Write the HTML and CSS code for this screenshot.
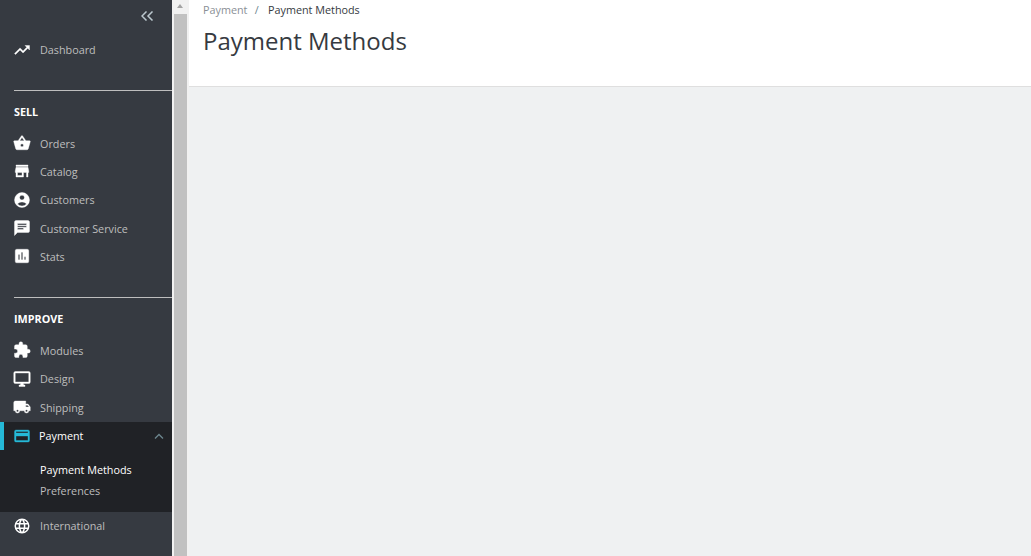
FILE: index.html
```html
<!DOCTYPE html>
<html lang="en">
<head>
  <meta charset="UTF-8">
  <title>Payment Methods</title>
  <link rel="stylesheet" href="styles.css">
</head>
<body>

<div class="layout">
  <nav class="sidebar">
    <div class="collapse-row">
      <svg class="collapse-icon" viewBox="0 0 13 10" width="13" height="10"><path d="M5.500 .5 1 5l4.500 4.500M11.500 .5 7 5l4.500 4.500" fill="none" stroke="#bcc8cf" stroke-width="1.500"/></svg>
    </div>

    <a class="nav-item">
      <svg class="nav-icon" viewBox="0 0 24 24"><path d="M16 6l2.300 2.300-4.900 4.900-4-4L2 16.600 3.400 18l6-6 4 4 6.300-6.300L22 12V6z"/></svg>
      <span>Dashboard</span>
    </a>

    <div class="section-title">SELL</div>
    <a class="nav-item">
      <svg class="nav-icon" viewBox="0 0 24 24"><path d="M17.200 9 12.800 2.500a1 1 0 0 0-1.600 0L6.800 9H2a1 1 0 0 0-1 1.300l2.600 9.200A2 2 0 0 0 5.500 21h13a2 2 0 0 0 1.900-1.500l2.600-9.200A1 1 0 0 0 22 9zM9 9l3-4.400L15 9zm3 8a2 2 0 1 1 0-4 2 2 0 0 1 0 4z"/></svg>
      <span>Orders</span>
    </a>
    <a class="nav-item">
      <svg class="nav-icon" viewBox="0 0 24 24"><path d="M20 4H4v2h16zm1 10v-2l-1-5H4l-1 5v2h1v6h10v-6h4v6h2v-6zm-9 4H6v-4h6z"/></svg>
      <span>Catalog</span>
    </a>
    <a class="nav-item">
      <svg class="nav-icon" viewBox="0 0 24 24"><path d="M12 2a10 10 0 1 0 0 20 10 10 0 0 0 0-20zm0 3.500a3.300 3.300 0 1 1 0 6.600 3.300 3.300 0 0 1 0-6.600zM12 20a7.800 7.800 0 0 1-6-2.800c1.300-1.700 3.800-2.700 6-2.700s4.700 1 6 2.700a7.800 7.800 0 0 1-6 2.800z"/></svg>
      <span>Customers</span>
    </a>
    <a class="nav-item">
      <svg class="nav-icon" viewBox="0 0 24 24"><path d="M20 2H4a2 2 0 0 0-2 2v18l4-4h14a2 2 0 0 0 2-2V4a2 2 0 0 0-2-2zM6 9h12v2H6zm8 5H6v-2h8zm4-6H6V6h12z"/></svg>
      <span>Customer Service</span>
    </a>
    <a class="nav-item">
      <svg class="nav-icon" viewBox="0 0 24 24"><path d="M19 3H5a2 2 0 0 0-2 2v14a2 2 0 0 0 2 2h14a2 2 0 0 0 2-2V5a2 2 0 0 0-2-2zM9 17H7v-7h2zm4 0h-2V7h2zm4 0h-2v-4h2z"/></svg>
      <span>Stats</span>
    </a>

    <div class="section-title section-improve">IMPROVE</div>
    <a class="nav-item">
      <svg class="nav-icon" viewBox="0 0 24 24"><path d="M20.500 11H19V7a2 2 0 0 0-2-2h-4V3.500a2.500 2.500 0 0 0-5 0V5H4a2 2 0 0 0-2 2v3.800h1.500a2.700 2.700 0 0 1 0 5.400H2V20a2 2 0 0 0 2 2h3.800v-1.500a2.700 2.700 0 0 1 5.400 0V22H17a2 2 0 0 0 2-2v-4h1.500a2.500 2.500 0 0 0 0-5z"/></svg>
      <span>Modules</span>
    </a>
    <a class="nav-item">
      <svg class="nav-icon" viewBox="0 0 24 24"><path d="M21 2H3a2 2 0 0 0-2 2v12a2 2 0 0 0 2 2h7v2H8v2h8v-2h-2v-2h7a2 2 0 0 0 2-2V4a2 2 0 0 0-2-2zm0 14H3V4h18z"/></svg>
      <span>Design</span>
    </a>
    <a class="nav-item">
      <svg class="nav-icon" viewBox="0 0 24 24"><path d="M20 8h-3V4H3a2 2 0 0 0-2 2v11h2a3 3 0 0 0 6 0h6a3 3 0 0 0 6 0h2v-5zM6 18.500a1.500 1.500 0 1 1 0-3 1.500 1.500 0 0 1 0 3zm13.500-9 2 2.500H17V9.500zM18 18.500a1.500 1.500 0 1 1 0-3 1.500 1.500 0 0 1 0 3z"/></svg>
      <span>Shipping</span>
    </a>

    <div class="active-group">
      <a class="nav-item active">
        <svg class="nav-icon" viewBox="0 0 24 24"><path d="M20 4H4a2 2 0 0 0-2 2v12a2 2 0 0 0 2 2h16a2 2 0 0 0 2-2V6a2 2 0 0 0-2-2zm0 14H4v-6h16zm0-10H4V6h16z"/></svg>
        <span>Payment</span>
        <svg class="chevron" viewBox="0 0 10 6" width="10" height="6"><path d="M1 5.500 5 1.500l4 4" fill="none" stroke="#6c868e" stroke-width="1.300"/></svg>
      </a>
      <ul class="submenu">
        <li class="current">Payment Methods</li>
        <li>Preferences</li>
      </ul>
    </div>

    <a class="nav-item">
      <svg class="nav-icon globe" viewBox="0 0 24 24"><path d="M12 2a10 10 0 1 0 0 20 10 10 0 0 0 0-20zm6.900 6h-2.950a15.600 15.600 0 0 0-1.380-3.560A8 8 0 0 1 18.900 8zM12 4c.83 1.200 1.480 2.530 1.910 4h-3.820c.43-1.470 1.080-2.800 1.910-4zM4.260 14a8.200 8.200 0 0 1 0-4h3.380a16.500 16.500 0 0 0 0 4zm.82 2h2.950c.32 1.250.78 2.450 1.380 3.560A8 8 0 0 1 5.080 16zm2.950-8H5.080a8 8 0 0 1 4.330-3.560A15.600 15.600 0 0 0 8.030 8zM12 20c-.83-1.200-1.480-2.530-1.910-4h3.820c-.43 1.470-1.080 2.800-1.910 4zm2.340-6H9.660a14.700 14.700 0 0 1 0-4h4.680a14.700 14.700 0 0 1 0 4zm.25 5.560c.6-1.110 1.060-2.310 1.380-3.560h2.950a8 8 0 0 1-4.330 3.560zM16.360 14a16.500 16.500 0 0 0 0-4h3.380a8.200 8.200 0 0 1 0 4z"/></svg>
      <span>International</span>
    </a>
  </nav>

  <div class="scrollbar">
    <div class="scroll-arrow"></div>
    <div class="scroll-thumb"></div>
  </div>

  <main class="content">
    <header class="page-head">
      <div class="breadcrumb">
        <span class="crumb-link">Payment</span>
        <span class="crumb-sep">/</span>
        <span class="crumb-current">Payment Methods</span>
      </div>
      <h1>Payment Methods</h1>
    </header>
  </main>
</div>

</body>
</html>
```

FILE: styles.css
```css
html, body {
  margin: 0;
  height: 100%;
  overflow: hidden;
}
body {
  font-family: "Open Sans", "Liberation Sans", sans-serif;
  background-color: #eff1f2;
}
.layout {
  display: flex;
  height: 556px;
}

/* Sidebar */
.sidebar {
  width: 172px;
  flex: none;
  background-color: #363a41;
  overflow: hidden;
}
.collapse-row {
  display: flex;
  justify-content: flex-end;
  height: 35.5px;
  padding: 11px 18px 0 0;
  box-sizing: border-box;
}
.nav-item {
  display: flex;
  align-items: center;
  height: 28.3px;
  padding-left: 13px;
  font-size: 10.8px;
  color: #bebebe;
}
.nav-icon {
  width: 18px;
  height: 18px;
  margin-right: 9px;
  fill: #fff;
  stroke: #fff;
  stroke-width: .5;
  flex: none;
}
.nav-icon.globe {
  stroke: none;
}
.section-title {
  margin: 26px 0 0 14px;
  padding: 14px 0 10.2px;
  border-top: 1px solid #bebebe;
  font-size: 10.8px;
  font-weight: 700;
  line-height: 14px;
  color: #fff;
}
.section-improve {
  margin-top: 26.3px;
  padding-bottom: 10.5px;
}
.active-group {
  margin-top: .4px;
  background-color: #202226;
  height: 90px;
}
.nav-item.active {
  position: relative;
  color: #fff;
  height: 28px;
}
.nav-item.active::before {
  content: "";
  position: absolute;
  left: 0;
  top: 0;
  bottom: 0;
  width: 4px;
  background-color: #25b9d7;
}
.nav-item.active .nav-icon {
  margin-right: 8px;
  fill: #25b9d7;
  stroke: #25b9d7;
}
.chevron {
  margin-left: auto;
  margin-right: 8px;
}
.submenu {
  list-style: none;
  margin: 0;
  padding: 9px 0 0 40px;
  font-size: 10.8px;
  line-height: 21px;
  color: #bebebe;
}
.submenu .current {
  color: #fff;
}

/* Scrollbar */
.scrollbar {
  width: 17px;
  flex: none;
  display: flex;
  flex-direction: column;
  background-color: #f1f1f1;
}
.scroll-arrow {
  height: 14px;
  position: relative;
}
.scroll-arrow::after {
  content: "";
  position: absolute;
  left: 5px;
  top: 4px;
  border-left: 3.5px solid transparent;
  border-right: 3.5px solid transparent;
  border-bottom: 4px solid #a3a3a3;
}
.scroll-thumb {
  flex: 1;
  margin: 0 2px;
  background-color: #c1c1c1;
}

/* Content */
.content {
  flex: 1;
}
.page-head {
  height: 87px;
  box-sizing: border-box;
  padding: 2px 0 0 14px;
  background-color: #fff;
  border-bottom: 1px solid #dfdfdf;
}
.breadcrumb {
  font-size: 10.8px;
  line-height: 15px;
  color: #363a41;
}
.crumb-link {
  color: #8a8f96;
}
.crumb-sep {
  color: #6c868e;
  margin: 0 6.5px 0 4.5px;
}
h1 {
  margin: 7px 0 0;
  font-size: 24px;
  font-weight: 400;
  line-height: 34px;
  color: #363a41;
}
```
